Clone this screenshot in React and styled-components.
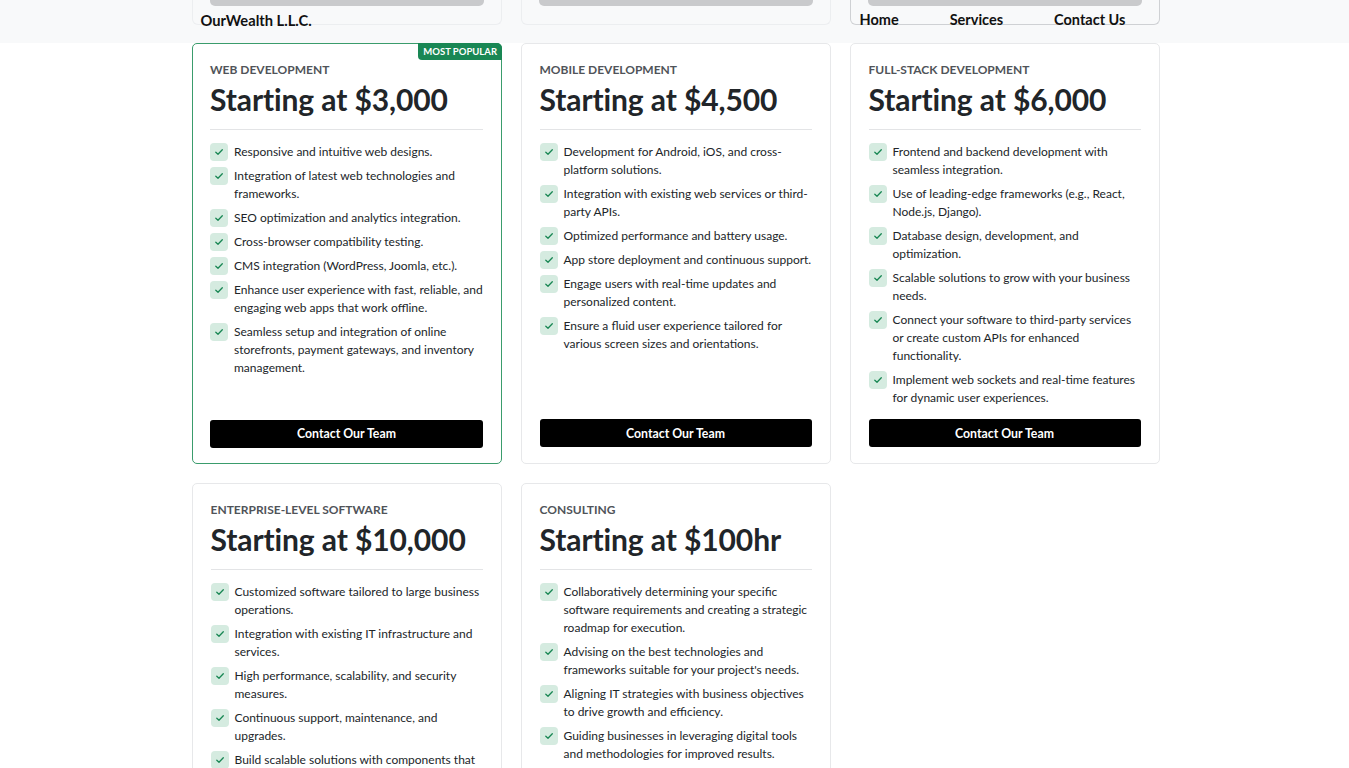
import React from "react";
import styled, { createGlobalStyle } from "styled-components";

const Global = createGlobalStyle`
  html, body { margin: 0; padding: 0; background: #ffffff; }
  body { font-family: Lato, "Open Sans", "Liberation Sans", sans-serif; color: #212529; }
  * { box-sizing: border-box; }
`;

const Header = styled.header`
  background: #f8f9fa;
  height: 43px;
`;

const Container = styled.div`
  width: 968px;
  margin: 0 auto;
  padding-left: 1px;
  display: grid;
  grid-template-columns: repeat(3, 310px);
  column-gap: 19px;
`;

const HeaderBox = styled.div`
  height: 25px;
  display: flex;
  flex-direction: column;
  border: 1px solid ${(p) => (p.$dark ? "#cfd1d4" : "#eceef0")};
  border-top: none;
  border-radius: 0 0 6px 6px;
`;

const Bar = styled.div`
  height: 6px;
  margin: 0 17px;
  background: #c9cacc;
  border-radius: 0 0 5px 5px;
  flex-shrink: 0;
`;

const Brand = styled.div`
  margin-top: 4px;
  padding-left: 8px;
  font-size: 14.7px;
  font-weight: 700;
  line-height: 20px;
  color: #111;
  white-space: nowrap;
`;

const Nav = styled.nav`
  margin-top: 4px;
  padding-left: 9px;
  display: flex;
  gap: 51px;
  font-size: 14.5px;
  font-weight: 700;
  line-height: 20px;
  color: #111;
  white-space: nowrap;
`;

const Main = styled.main`
  padding-bottom: 40px;
`;

const Grid = styled(Container)`
  row-gap: 19px;
  align-items: stretch;
`;

const Card = styled.div`
  position: relative;
  background: #fff;
  border: ${(p) => (p.$featured ? "1.5px solid #3a9c6c" : "1px solid #e7e8ea")};
  border-radius: 5px;
  padding: ${(p) => (p.$featured ? "16.5px 17.5px 15.5px" : "17px 18px 16px")};
  display: flex;
  flex-direction: column;
`;

const Badge = styled.div`
  position: absolute;
  top: -1.5px;
  right: -1.5px;
  background: #198754;
  color: #fff;
  font-size: 9.5px;
  font-weight: 700;
  line-height: 17px;
  padding: 0 5px;
  border-radius: 0 5px 0 4px;
`;

const Category = styled.div`
  font-size: 12px;
  font-weight: 700;
  line-height: 18px;
  color: #505459;
  text-transform: uppercase;
`;

const Price = styled.h2`
  margin: 3px 0 0;
  font-size: 30px;
  font-weight: 700;
  line-height: 34px;
  color: #212529;
  letter-spacing: -0.1px;
`;

const Divider = styled.hr`
  margin: 13px 0 13px;
  border: none;
  border-top: 1px solid #e3e4e6;
`;

const List = styled.ul`
  list-style: none;
  margin: 0;
  padding: 0;
  display: flex;
  flex-direction: column;
  gap: 6px;
`;

const Item = styled.li`
  display: flex;
  gap: 6px;
  font-size: 12px;
  line-height: 18px;
  color: #212529;
`;

const CheckBox = styled.span`
  flex: 0 0 18px;
  width: 18px;
  height: 18px;
  border-radius: 4px;
  background: #d5ebe0;
  display: flex;
  align-items: center;
  justify-content: center;
`;

const Button = styled.button`
  width: 100%;
  height: 28px;
  border: none;
  border-radius: 3px;
  background: #000;
  color: #fff;
  font-family: inherit;
  font-size: 12.3px;
  font-weight: 700;
  cursor: pointer;
`;

const ButtonWrap = styled.div`
  margin-top: auto;
  padding-top: 12px;
`;

const Check = () => (
  <CheckBox>
    <svg width="10" height="10" viewBox="0 0 10 10" fill="none">
      <polyline points="1.8,5.2 4,7.3 8.3,2.8" stroke="#198754" strokeWidth="1.3" strokeLinecap="round" strokeLinejoin="round" />
    </svg>
  </CheckBox>
);

const plans = [
  {
    cat: "Web Development",
    price: "Starting at $3,000",
    featured: true,
    items: [
      "Responsive and intuitive web designs.",
      "Integration of latest web technologies and frameworks.",
      "SEO optimization and analytics integration.",
      "Cross-browser compatibility testing.",
      "CMS integration (WordPress, Joomla, etc.).",
      "Enhance user experience with fast, reliable, and engaging web apps that work offline.",
      "Seamless setup and integration of online storefronts, payment gateways, and inventory management.",
    ],
  },
  {
    cat: "Mobile Development",
    price: "Starting at $4,500",
    items: [
      "Development for Android, iOS, and cross-platform solutions.",
      "Integration with existing web services or third-party APIs.",
      "Optimized performance and battery usage.",
      "App store deployment and continuous support.",
      "Engage users with real-time updates and personalized content.",
      "Ensure a fluid user experience tailored for various screen sizes and orientations.",
    ],
  },
  {
    cat: "Full-Stack Development",
    price: "Starting at $6,000",
    items: [
      "Frontend and backend development with seamless integration.",
      "Use of leading-edge frameworks (e.g., React, Node.js, Django).",
      "Database design, development, and optimization.",
      "Scalable solutions to grow with your business needs.",
      "Connect your software to third-party services or create custom APIs for enhanced functionality.",
      "Implement web sockets and real-time features for dynamic user experiences.",
    ],
  },
  {
    cat: "Enterprise-Level Software",
    price: "Starting at $10,000",
    items: [
      "Customized software tailored to large business operations.",
      "Integration with existing IT infrastructure and services.",
      "High performance, scalability, and security measures.",
      "Continuous support, maintenance, and upgrades.",
      "Build scalable solutions with components that can be developed and deployed independently.",
    ],
  },
  {
    cat: "Consulting",
    price: "Starting at $100hr",
    items: [
      "Collaboratively determining your specific software requirements and creating a strategic roadmap for execution.",
      "Advising on the best technologies and frameworks suitable for your project's needs.",
      "Aligning IT strategies with business objectives to drive growth and efficiency.",
      "Guiding businesses in leveraging digital tools and methodologies for improved results.",
      "Reviewing existing systems to identify opportunities for optimization.",
    ],
  },
];

export default function App() {
  return (
    <>
      <Global />
      <Header>
        <Container>
          <HeaderBox>
            <Bar />
            <Brand>OurWealth L.L.C.</Brand>
          </HeaderBox>
          <HeaderBox>
            <Bar />
          </HeaderBox>
          <HeaderBox $dark>
            <Bar />
            <Nav>
              <span>Home</span>
              <span>Services</span>
              <span>Contact Us</span>
            </Nav>
          </HeaderBox>
        </Container>
      </Header>
      <Main>
        <Grid>
          {plans.map((p) => (
            <Card key={p.cat} $featured={p.featured}>
              {p.featured && <Badge>MOST POPULAR</Badge>}
              <Category>{p.cat}</Category>
              <Price>{p.price}</Price>
              <Divider />
              <List>
                {p.items.map((t) => (
                  <Item key={t}>
                    <Check />
                    <span>{t}</span>
                  </Item>
                ))}
              </List>
              <ButtonWrap>
                <Button>Contact Our Team</Button>
              </ButtonWrap>
            </Card>
          ))}
        </Grid>
      </Main>
    </>
  );
}
